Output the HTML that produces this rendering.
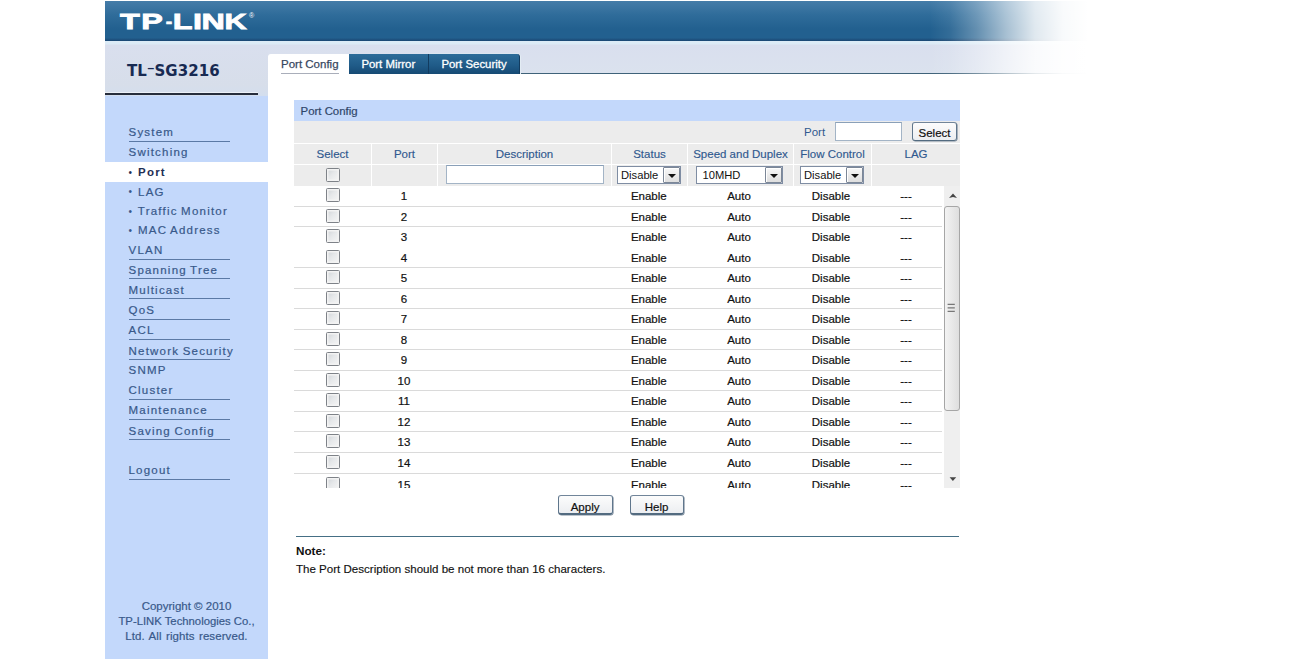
<!DOCTYPE html>
<html><head><meta charset="utf-8"><title>TL-SG3216</title>
<style>
*{box-sizing:border-box;margin:0;padding:0}
html,body{width:1300px;height:661px;overflow:hidden;background:#fff;font-family:"Liberation Sans",Arial,sans-serif;font-size:11.5px;color:#222}
.abs{position:absolute}
#hdr{position:absolute;left:105px;top:1px;width:1000px;height:40px;background:linear-gradient(to bottom,#457ca8 0%,#2f6c9a 35%,#22608f 70%,#22608f 92%,#1a4672 100%)}
#band{position:absolute;left:105px;top:41px;width:1000px;height:33px;background:linear-gradient(to bottom,#dcebf6 0,#dcebf6 3px,#d9dfee 4px,#dbe2ee 100%)}
#bandline{position:absolute;left:268px;top:72.8px;width:840px;height:1.6px;background:#3f6279}
#fade{position:absolute;left:900px;top:0;width:400px;height:78px;background:linear-gradient(to right,rgba(255,255,255,0) 0,rgba(255,255,255,0) 30px,rgba(255,255,255,.08) 50px,rgba(255,255,255,.3) 77px,rgba(255,255,255,.6) 106px,rgba(255,255,255,.86) 135px,rgba(255,255,255,.97) 163px,#fff 188px,#fff 100%)}
#logo{position:absolute;left:120.2px;top:9.4px;font-weight:bold;font-size:22.6px;color:#fff;transform-origin:0 0;transform:scaleX(1.431);white-space:nowrap;line-height:26px;-webkit-text-stroke:0.8px #fff}
.hy{display:inline-block;transform:scale(.6,.8);transform-origin:0 50%;position:relative;top:-0.9px;letter-spacing:-2.3px}
#reg{position:absolute;left:249px;top:12px;color:#fff;font-size:7px}
#side{position:absolute;left:105px;top:96px;width:163px;height:563px;background:#c3d8fb}
#sidetop{position:absolute;left:105px;top:45px;width:163px;height:51px;background:linear-gradient(to bottom,#d9dfee 0,#d7deea 80%,#d3deee 100%)}
#model{position:absolute;left:127px;top:60.9px;font-family:"DejaVu Sans","Liberation Sans",sans-serif;font-weight:bold;font-size:15px;color:#172a52;line-height:20px;white-space:nowrap;letter-spacing:0.08px}
#model i{font-style:normal;font-weight:normal;position:relative;top:-2.6px;display:inline-block;transform:scaleX(1.5);margin:0 1px}
#sideline{position:absolute;left:105px;top:93.3px;width:153px;height:2.2px;background:#262d3c;box-shadow:0 -1px 0 rgba(255,255,255,.55)}
.mi{position:absolute;left:128.5px;height:16px;line-height:16px;font-size:11.5px;letter-spacing:1.22px;color:#38588a;white-space:nowrap;-webkit-text-stroke:0.2px #38588a;word-spacing:-1px}
.mi.act{color:#1f2f55;font-weight:bold;-webkit-text-stroke:0}
.ul{position:absolute;left:128.5px;width:101px;height:1.4px;background:#5b79a5}
.mi b{font-size:10px;font-weight:normal;position:relative;top:-0.5px;-webkit-text-stroke:0;margin-right:1.4px}
#actbg{position:absolute;left:105px;top:162px;width:170px;height:20px;background:#fff}
#copy{position:absolute;left:105px;top:598.9px;width:163px;text-align:center;color:#38588a;font-size:11.5px;line-height:14.85px;-webkit-text-stroke:0.2px #38588a;white-space:nowrap}
#copy span{font-size:11.3px}
#copy em{font-style:normal;word-spacing:1.1px;letter-spacing:0.08px}
#content{position:absolute;left:268px;top:54px;width:700px;height:20px;background:#fff}
.tab{position:absolute;top:54px;height:20px;line-height:20px;text-align:center;font-size:11.4px;color:#fff;-webkit-text-stroke:0.3px #fff;background:linear-gradient(to bottom,#2d6c99 0,#1f5a87 60%,#164a74 100%);border-right:1px solid #123c60}
#tab1{position:absolute;left:268px;top:54px;width:81px;height:21px;background:#fff;color:#38485f;line-height:20px;font-size:11.5px;border-radius:3px 0 0 0;-webkit-text-stroke:0.25px #38485f}
#tab1 span{position:absolute;left:13px;top:0;border-bottom:1.8px solid #a9aeba;height:20px;white-space:nowrap}
#ptitle{position:absolute;left:294px;top:99.5px;width:666px;height:21.5px;background:#c3d8fb;color:#2f4669;line-height:23.4px;padding-left:6.6px;font-size:11.4px;-webkit-text-stroke:0.2px #2f4669}
#prow{position:absolute;left:294px;top:121px;width:666px;height:22px;background:#ececec}
.hc{position:absolute;top:144px;height:19.5px;background:#ececec;color:#30598f;text-align:center;line-height:20.5px;white-space:nowrap;-webkit-text-stroke:0.15px #30598f}
.fc{position:absolute;top:164.6px;height:21px;background:#ececec}
input.t{position:absolute;border:1px solid #a3b4c6;border-top-color:#8aa0b8;background:#fff;height:18px}
.sel{position:absolute;top:165.5px;height:18.5px;border:1px solid #7f8da3;background:#fff;font-size:11.2px;line-height:17px;color:#111;padding-left:3px;white-space:nowrap}
.sel i{position:absolute;right:0;top:0;width:17px;height:16.5px;border:1px solid #7c8797;background:linear-gradient(#f8f8f8,#dedede);border-radius:1px;box-shadow:inset 1px 1px 0 #fff}
.sel i:after{content:"";position:absolute;left:3.5px;top:6px;border:4px solid transparent;border-top:4px solid #111;border-bottom:0}
#body{position:absolute;left:294px;top:186px;width:666px;height:301.5px;overflow:hidden;background:#fff}
.r{position:relative;height:20.5px;border-bottom:1px solid #dadada;width:648px;line-height:20.5px;color:#111;-webkit-text-stroke:0.2px #111}
.r:nth-child(3){border-bottom-color:#fff}
.r:nth-child(13){height:20.9px;line-height:20.9px}
.r:nth-child(14){height:21px;line-height:21px}
.r:nth-child(15){line-height:22px}
.r:nth-child(15) .cb{top:3.3px}
.r span{position:absolute;top:0;text-align:center;white-space:nowrap}
.cb{width:14px;height:14px;border:1px solid #7e8288;background:linear-gradient(135deg,#cfd3d7 0,#e6e8ea 45%,#f6f6f6 100%);box-shadow:inset 0 0 0 1.5px #f3f3f3;border-radius:1.5px}
.r .cb{left:32px;top:2.4px}
.c2{left:90px;width:40px} .c4{left:324.8px;width:60px} .c5{left:415px;width:60px} .c6{left:507px;width:60px} .c7{left:592px;width:40px}
#sb{position:absolute;left:944px;top:186px;width:16px;height:301.5px;background:#efefef}
#thumb{position:absolute;left:944px;top:206px;width:15.5px;height:205px;border:1px solid #a6a6a6;border-radius:3px;background:linear-gradient(to right,#f3f3f3,#dedede)}
.btn{position:absolute;top:495px;height:19.5px;border:1px solid #5f768c;border-top-color:#71859a;border-bottom:2px solid #536b80;border-radius:3px;background:linear-gradient(#fcfcfc,#eceef1);font-size:11.5px;text-align:center;line-height:23.4px;color:#111;box-shadow:0.6px 0.6px 0 #7d8c9c;-webkit-text-stroke:0.2px #111}
#hr{position:absolute;left:295.5px;top:535.8px;width:663px;height:1.4px;background:#456f85}
#note{position:absolute;left:296px;top:543.5px;font-weight:bold;font-size:11.7px;color:#111;line-height:14px}
#notet{position:absolute;left:296px;top:562px;font-size:11.55px;color:#111;-webkit-text-stroke:0.15px #111;line-height:14px;white-space:nowrap}
</style></head><body>
<div id="hdr"></div>
<div id="band"></div>
<div id="bandline"></div>
<div id="fade"></div>
<div id="logo"><span style="letter-spacing:1.08px">T</span><span style="letter-spacing:1.7px">P</span><span class="hy">-</span><span style="letter-spacing:.24px">L</span><span style="letter-spacing:-.2px">I</span><span style="letter-spacing:-.1px">N</span><span style="display:inline-block;transform:scaleX(.95);transform-origin:0 50%">K</span></div><div id="reg">®</div>
<div id="sidetop"></div>
<div id="model">TL<i>-</i>SG3216</div>
<div id="sideline"></div>
<div id="side"></div>
<div id="actbg"></div>
<div class="mi" style="top:124px">System</div>
<div class="ul" style="top:141px"></div>
<div class="mi" style="top:144px">Switching</div>
<div class="mi act" style="top:164px"><b>•</b> Port</div>
<div class="mi" style="top:183.5px"><b>•</b> LAG</div>
<div class="mi" style="top:203px"><b>•</b> Traffic Monitor</div>
<div class="mi" style="top:222px"><b>•</b> MAC Address</div>
<div class="mi" style="top:241.5px">VLAN</div>
<div class="ul" style="top:259px"></div>
<div class="mi" style="top:262px">Spanning Tree</div>
<div class="ul" style="top:278px"></div>
<div class="mi" style="top:281.5px">Multicast</div>
<div class="ul" style="top:298px"></div>
<div class="mi" style="top:301.5px">QoS</div>
<div class="ul" style="top:319px"></div>
<div class="mi" style="top:322px">ACL</div>
<div class="ul" style="top:339px"></div>
<div class="mi" style="top:342.5px">Network Security</div>
<div class="ul" style="top:359px"></div>
<div class="mi" style="top:362px">SNMP</div>
<div class="mi" style="top:382px">Cluster</div>
<div class="ul" style="top:399px"></div>
<div class="mi" style="top:402px">Maintenance</div>
<div class="ul" style="top:419px"></div>
<div class="mi" style="top:422.5px">Saving Config</div>
<div class="ul" style="top:439px"></div>
<div class="mi" style="top:462px">Logout</div>
<div class="ul" style="top:479px"></div>

<div id="copy">Copyright © 2010<br><span>TP-LINK Technologies Co.,</span><br><em>Ltd. All rights reserved.</em></div>
<div id="tab1"><span>Port Config</span></div>
<div class="tab" style="left:348.6px;width:80.4px">Port Mirror</div>
<div class="tab" style="left:429px;width:91px;border-radius:0 3px 0 0;box-shadow:1px 0 0 #e3ecf4,0 -1px 0 #dbe6f0">Port Security</div>
<div id="ptitle">Port Config</div>
<div id="prow"></div>
<div class="abs" style="left:804px;top:125px;color:#30598f;line-height:14px">Port</div>
<input class="t" style="left:835px;top:122px;width:67px;height:19px" type="text">
<div class="btn" style="left:912px;top:122.3px;width:45px;line-height:21.6px;height:18.3px;border-bottom-width:1.3px">Select</div>
<div class="hc" style="left:294px;width:77px">Select</div>
<div class="hc" style="left:372px;width:65px">Port</div>
<div class="hc" style="left:438px;width:173px">Description</div>
<div class="hc" style="left:612px;width:75px">Status</div>
<div class="hc" style="left:688px;width:105px">Speed and Duplex</div>
<div class="hc" style="left:794px;width:77px">Flow Control</div>
<div class="hc" style="left:872px;width:88px">LAG</div>
<div class="fc" style="left:294px;width:77px"><span class="cb abs" style="left:32px;top:3.4px"></span></div>
<div class="fc" style="left:372px;width:65px"></div>
<div class="fc" style="left:438px;width:173px"></div>
<div class="fc" style="left:612px;width:75px"></div>
<div class="fc" style="left:688px;width:105px"></div>
<div class="fc" style="left:794px;width:77px"></div>
<div class="fc" style="left:872px;width:88px"></div>
<input class="t" style="left:446px;top:165px;width:158px;height:19px" type="text">
<div class="sel" style="left:617px;width:64px">Disable<i></i></div>
<div class="sel" style="left:696px;width:87px;padding-left:5.5px">10MHD<i></i></div>
<div class="sel" style="left:800px;width:64px">Disable<i></i></div>
<div id="body">
<div class="r"><span class="cb c1"></span><span class="c2">1</span><span class="c4">Enable</span><span class="c5">Auto</span><span class="c6">Disable</span><span class="c7">---</span></div>
<div class="r"><span class="cb c1"></span><span class="c2">2</span><span class="c4">Enable</span><span class="c5">Auto</span><span class="c6">Disable</span><span class="c7">---</span></div>
<div class="r"><span class="cb c1"></span><span class="c2">3</span><span class="c4">Enable</span><span class="c5">Auto</span><span class="c6">Disable</span><span class="c7">---</span></div>
<div class="r"><span class="cb c1"></span><span class="c2">4</span><span class="c4">Enable</span><span class="c5">Auto</span><span class="c6">Disable</span><span class="c7">---</span></div>
<div class="r"><span class="cb c1"></span><span class="c2">5</span><span class="c4">Enable</span><span class="c5">Auto</span><span class="c6">Disable</span><span class="c7">---</span></div>
<div class="r"><span class="cb c1"></span><span class="c2">6</span><span class="c4">Enable</span><span class="c5">Auto</span><span class="c6">Disable</span><span class="c7">---</span></div>
<div class="r"><span class="cb c1"></span><span class="c2">7</span><span class="c4">Enable</span><span class="c5">Auto</span><span class="c6">Disable</span><span class="c7">---</span></div>
<div class="r"><span class="cb c1"></span><span class="c2">8</span><span class="c4">Enable</span><span class="c5">Auto</span><span class="c6">Disable</span><span class="c7">---</span></div>
<div class="r"><span class="cb c1"></span><span class="c2">9</span><span class="c4">Enable</span><span class="c5">Auto</span><span class="c6">Disable</span><span class="c7">---</span></div>
<div class="r"><span class="cb c1"></span><span class="c2">10</span><span class="c4">Enable</span><span class="c5">Auto</span><span class="c6">Disable</span><span class="c7">---</span></div>
<div class="r"><span class="cb c1"></span><span class="c2">11</span><span class="c4">Enable</span><span class="c5">Auto</span><span class="c6">Disable</span><span class="c7">---</span></div>
<div class="r"><span class="cb c1"></span><span class="c2">12</span><span class="c4">Enable</span><span class="c5">Auto</span><span class="c6">Disable</span><span class="c7">---</span></div>
<div class="r"><span class="cb c1"></span><span class="c2">13</span><span class="c4">Enable</span><span class="c5">Auto</span><span class="c6">Disable</span><span class="c7">---</span></div>
<div class="r"><span class="cb c1"></span><span class="c2">14</span><span class="c4">Enable</span><span class="c5">Auto</span><span class="c6">Disable</span><span class="c7">---</span></div>
<div class="r"><span class="cb c1"></span><span class="c2">15</span><span class="c4">Enable</span><span class="c5">Auto</span><span class="c6">Disable</span><span class="c7">---</span></div>
</div>
<div id="sb"></div>
<div id="thumb"></div>
<svg class="abs" style="left:944px;top:186px" width="16" height="304" viewBox="0 0 16 304">
<path d="M5 12 L9 7.6 L13 12 L9 11 Z" fill="#444"/>
<path d="M5.6 291.2 L8.9 294.9 L12.2 291.2 Z" fill="#444"/>
<path d="M3.6 118.4h7.2M3.6 121.9h7.2M3.6 125.3h7.2" stroke="#777" stroke-width="1.2"/>
</svg>
<div class="btn" style="left:557.6px;width:55px">Apply</div>
<div class="btn" style="left:629.6px;width:54px">Help</div>
<div id="hr"></div>
<div id="note">Note:</div>
<div id="notet">The Port Description should be not more than 16 characters.</div>
</body></html>
